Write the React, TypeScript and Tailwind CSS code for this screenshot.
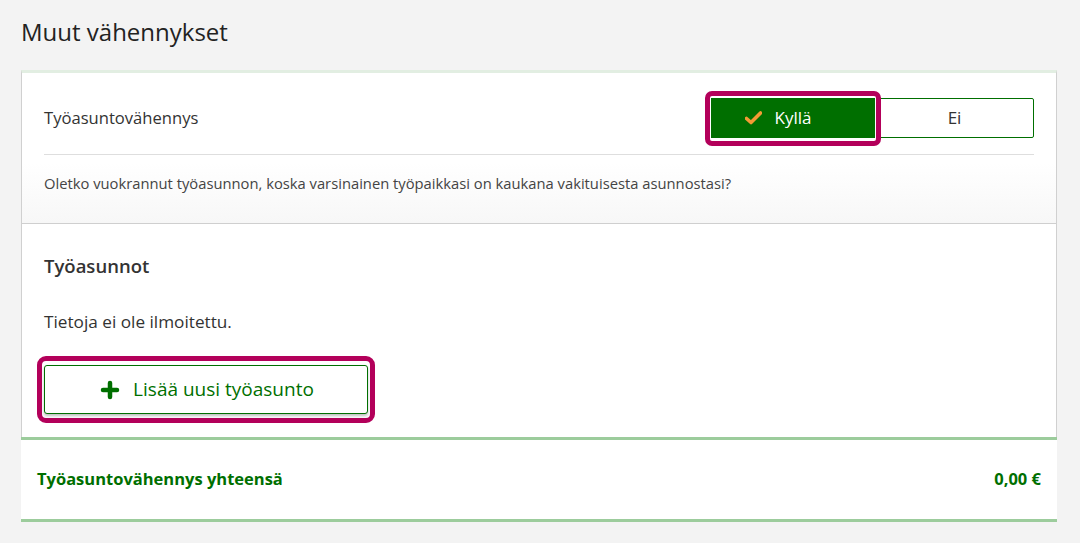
import { Plus } from "lucide-react";

const App = () => {
  return (
    <div
      className="min-h-[543px] bg-[#f3f3f3] px-[21px] pt-[16px] pb-[21px] text-[#333]"
      style={{ fontFamily: '"Open Sans", "Noto Sans", sans-serif' }}
    >
      <h1 className="text-[24px] leading-[32px] font-medium text-[#222] mb-[22px]">
        Muut vähennykset
      </h1>

      <div className="w-[1036px] bg-white border-t-[3px] border-t-[#e2eee2] border-x border-x-[#d0d0d0]">
        {/* Question row */}
        <div className="px-[22px] pt-[25px] pb-[30px] border-b border-[#cfcfcf] bg-gradient-to-b from-white from-60% to-[#f7f7f7]">
          <div className="flex items-center justify-between pb-[16px] border-b border-[#dedede]">
            <span className="text-[16.6px] leading-[24px]">Työasuntovähennys</span>
            <div className="flex">
              <div className="relative">
                <div className="absolute -left-[6px] -right-[6px] -top-[7px] -bottom-[8px] rounded-[7px] border-[5px] border-[#b3005a] bg-white" />
                <button className="relative flex items-center justify-center gap-[13px] w-[164px] h-[40px] pr-[30px] bg-[#006f00] text-white text-[17px] border border-[#006f00]">
                  <svg width="17" height="14" viewBox="0 0 17 14">
                    <path d="M1.5 7.5 L6 11.5 L15.5 2" fill="none" stroke="#f39a35" strokeWidth="3.6" strokeLinecap="round" strokeLinejoin="round" />
                  </svg>
                  Kyllä
                </button>
              </div>
              <button className="w-[159px] h-[40px] bg-white border border-[#006f00] rounded-r-[2px] text-[17px] text-[#333]">
                Ei
              </button>
            </div>
          </div>
          <p className="text-[14.75px] leading-[20px] mt-[18px] text-[#444]">
            Oletko vuokrannut työasunnon, koska varsinainen työpaikkasi on kaukana vakituisesta asunnostasi?
          </p>
        </div>

        {/* Apartments */}
        <div className="px-[22px] pt-[30px] pb-[23px]">
          <h2 className="text-[18.5px] leading-[24px] font-semibold text-[#333]">Työasunnot</h2>
          <p className="text-[17.2px] leading-[24px] mt-[32px]">Tietoja ei ole ilmoitettu.</p>
          <div className="relative inline-block mt-[31px]">
            <div className="absolute -left-[7px] -right-[7px] -top-[9px] -bottom-[9px] rounded-[9px] border-[5px] border-[#b3005a] bg-white" />
            <button className="relative flex items-center justify-center gap-[11px] w-[324px] h-[49px] bg-white border border-[#006f00] rounded-[3px] shadow-[0_2px_3px_rgba(0,0,0,0.25)] text-[19px] text-[#006f00]">
              <Plus className="w-[24px] h-[24px]" strokeWidth={4.5} />
              Lisää uusi työasunto
            </button>
          </div>
        </div>
      </div>

      {/* Summary */}
      <div className="w-[1036px] flex items-center justify-between h-[85px] px-[16px] bg-white border-t-[3px] border-b-[3px] border-[#9ccc9c] text-[#006f00] font-bold text-[16.5px]">
        <span>Työasuntovähennys yhteensä</span>
        <span>0,00 €</span>
      </div>
    </div>
  );
};

export default App;
